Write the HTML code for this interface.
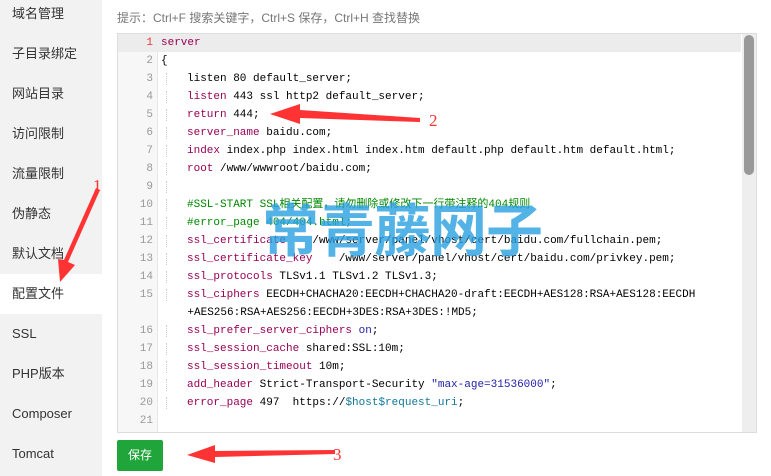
<!DOCTYPE html>
<html><head><meta charset="utf-8"><style>
*{margin:0;padding:0;box-sizing:border-box}
body{width:771px;height:476px;overflow:hidden;background:#fff;font-family:"Liberation Sans","Noto Sans CJK SC",sans-serif;position:relative}
.side{position:absolute;left:0;top:0;width:102px;height:476px;background:#f2f2f2}
.side div{position:absolute;left:0;width:102px;height:40px;line-height:40px;padding-left:12px;font-size:13px;color:#333}
.side div.act{background:#fff}
.tip{position:absolute;left:117px;top:9px;font-size:12px;color:#777}
.ed{position:absolute;left:117px;top:33px;width:640px;height:400px;border:1px solid #ddd;background:#fff;overflow:hidden}
.gut{position:absolute;left:0;top:0;width:40px;height:400px;background:#f7f7f7;border-right:1px solid #e8e8e8}
.hl{position:absolute;left:0;top:0;width:623px;height:18px;background:#ececec}
.code{position:absolute;left:0;top:0;font-family:"Liberation Mono","Noto Sans CJK SC",monospace;font-size:11px;}
.l{height:18px;line-height:18px;white-space:pre;position:relative}
.n{display:inline-block;width:35px;text-align:right;color:#999;margin-right:8px}
.l1 .n{color:#e33}
.k{color:#905}.b{color:#22a}.g{color:#080}.t{color:#179}
.i{border-left:1px dotted #ccc;margin-left:5px;padding-left:20px}
.sb{position:absolute;right:0;top:0;width:14px;height:398px;background:#eee}
.th{position:absolute;right:2px;top:1px;width:10px;height:140px;background:#999;border-radius:5px}
.btn{position:absolute;left:117px;top:440px;width:46px;height:31px;background:#20a53a;color:#fff;font-size:12px;text-align:center;line-height:31px;border-radius:2px}
.wm{position:absolute;left:262px;top:196px;font-size:57px;font-weight:bold;color:rgba(40,160,225,.8);letter-spacing:-1px;font-family:"Noto Sans CJK SC",sans-serif;line-height:62px}
svg{position:absolute;left:0;top:0}
</style></head><body>
<div class="side">
<div style="top:-6px">域名管理</div><div style="top:34px">子目录绑定</div><div style="top:74px">网站目录</div><div style="top:114px">访问限制</div><div style="top:154px">流量限制</div><div style="top:194px">伪静态</div><div style="top:234px">默认文档</div><div class="act" style="top:274px">配置文件</div><div style="top:314px">SSL</div><div style="top:354px">PHP版本</div><div style="top:394px">Composer</div><div style="top:434px">Tomcat</div>
</div>
<div class="tip">提示：Ctrl+F 搜索关键字，Ctrl+S 保存，Ctrl+H 查找替换</div>
<div class="ed">
<div class="gut"></div><div class="hl"></div>
<div class="code">
<div class="l l1"><span class="n">1</span><span class="k">server</span></div>
<div class="l"><span class="n">2</span>{</div>
<div class="l"><span class="n">3</span><span class="i">listen 80 default_server;</span></div>
<div class="l"><span class="n">4</span><span class="i"><span class="k">listen</span> 443 ssl http2 default_server;</span></div>
<div class="l"><span class="n">5</span><span class="i"><span class="k">return</span> 444;</span></div>
<div class="l"><span class="n">6</span><span class="i"><span class="k">server_name</span> baidu.com;</span></div>
<div class="l"><span class="n">7</span><span class="i"><span class="k">index</span> index.php index.html index.htm default.php default.htm default.html;</span></div>
<div class="l"><span class="n">8</span><span class="i"><span class="k">root</span> /www/wwwroot/baidu.com;</span></div>
<div class="l"><span class="n">9</span><span class="i"> </span></div>
<div class="l"><span class="n">10</span><span class="i g">#SSL-START SSL相关配置，请勿删除或修改下一行带注释的404规则</span></div>
<div class="l"><span class="n">11</span><span class="i g">#error_page 404/404.html;</span></div>
<div class="l"><span class="n">12</span><span class="i"><span class="k">ssl_certificate</span>    /www/server/panel/vhost/cert/baidu.com/fullchain.pem;</span></div>
<div class="l"><span class="n">13</span><span class="i"><span class="k">ssl_certificate_key</span>    /www/server/panel/vhost/cert/baidu.com/privkey.pem;</span></div>
<div class="l"><span class="n">14</span><span class="i"><span class="k">ssl_protocols</span> TLSv1.1 TLSv1.2 TLSv1.3;</span></div>
<div class="l"><span class="n">15</span><span class="i"><span class="k">ssl_ciphers</span> EECDH+CHACHA20:EECDH+CHACHA20-draft:EECDH+AES128:RSA+AES128:EECDH</span></div>
<div class="l"><span class="n"> </span>    +AES256:RSA+AES256:EECDH+3DES:RSA+3DES:!MD5;</div>
<div class="l"><span class="n">16</span><span class="i"><span class="k">ssl_prefer_server_ciphers</span> <span class="b">on</span>;</span></div>
<div class="l"><span class="n">17</span><span class="i"><span class="k">ssl_session_cache</span> shared:SSL:10m;</span></div>
<div class="l"><span class="n">18</span><span class="i"><span class="k">ssl_session_timeout</span> 10m;</span></div>
<div class="l"><span class="n">19</span><span class="i"><span class="k">add_header</span> Strict-Transport-Security <span class="b">"max-age=31536000"</span>;</span></div>
<div class="l"><span class="n">20</span><span class="i"><span class="k">error_page</span> 497  https://<span class="t">$host$request_uri</span>;</span></div>
<div class="l"><span class="n">21</span></div>
</div>
<div class="sb"><div class="th"></div></div>
</div>
<div class="wm">常青藤网子</div>
<div class="btn">保存</div>
<svg width="771" height="476">
<g fill="#f33">
<polygon points="96,188 100,190 68,262 75,265 60,282 58,259 64,260"/>
<polygon points="420,118 420,122 300,118 300,124 270,114 300,104 300,110"/>
<polygon points="335,450 335,454 215,457 215,463 187,455 215,445 215,451"/>
</g>
<g fill="#f33" font-family="Liberation Serif,serif" font-size="17">
<text x="93" y="191">1</text><text x="429" y="126">2</text><text x="333" y="460">3</text>
</g>
</svg>
</body></html>
